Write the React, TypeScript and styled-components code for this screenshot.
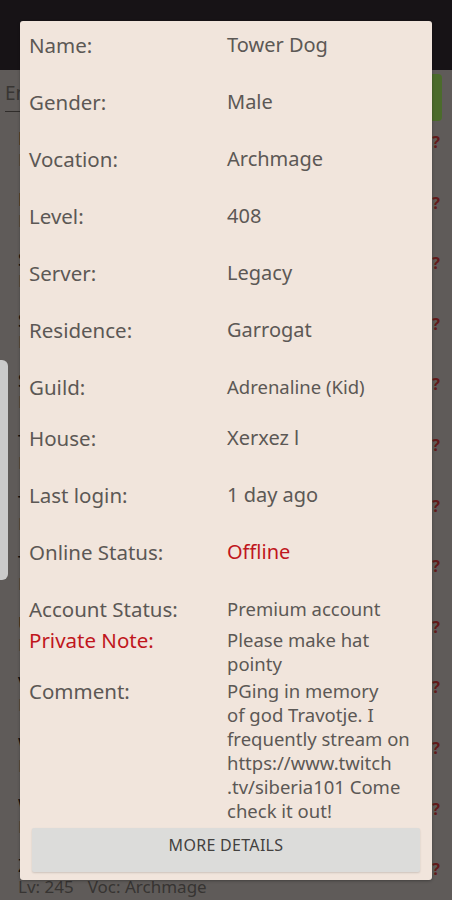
import React from "react"
import styled, { createGlobalStyle } from "styled-components"

const GlobalStyle = createGlobalStyle`
  html, body {
    margin: 0;
    padding: 0;
    background: #5e5a56;
  }
  * {
    box-sizing: border-box;
  }
`

const font = `"Noto Sans", "Open Sans", sans-serif`

type Character = {
  name: string
  level: number
  vocation: string
}

type Field = {
  label: string
  value: string
  gap: number
  red?: "label" | "value"
  small?: boolean
}

const characters: Character[] = [
  { name: "Lord Brutus", level: 512, vocation: "Elite Knight" },
  { name: "Lady Sira", level: 388, vocation: "Royal Paladin" },
  { name: "Sirion", level: 301, vocation: "Elder Druid" },
  { name: "Soul Eater", level: 477, vocation: "Master Sorcerer" },
  { name: "Sweet Pea", level: 199, vocation: "Elder Druid" },
  { name: "Tanker", level: 640, vocation: "Elite Knight" },
  { name: "Tower Dog", level: 408, vocation: "Archmage" },
  { name: "Tuzik", level: 233, vocation: "Royal Paladin" },
  { name: "Ulric", level: 350, vocation: "Elite Knight" },
  { name: "Ventus", level: 288, vocation: "Master Sorcerer" },
  { name: "Wally", level: 412, vocation: "Elder Druid" },
  { name: "Wizzy", level: 317, vocation: "Elder Druid" },
  { name: "Zed Hunter", level: 245, vocation: "Archmage" },
]

const fields: Field[] = [
  { label: "Name:", value: "Tower Dog", gap: 0 },
  { label: "Gender:", value: "Male", gap: 33 },
  { label: "Vocation:", value: "Archmage", gap: 33 },
  { label: "Level:", value: "408", gap: 33 },
  { label: "Server:", value: "Legacy", gap: 33 },
  { label: "Residence:", value: "Garrogat", gap: 33 },
  { label: "Guild:", value: "Adrenaline (Kid)", gap: 33, small: true },
  { label: "House:", value: "Xerxez l", gap: 27 },
  { label: "Last login:", value: "1 day ago", gap: 33 },
  { label: "Online Status:", value: "Offline", gap: 33, red: "value" },
  { label: "Account Status:", value: "Premium account", gap: 33, small: true },
  { label: "Private Note:", value: "Please make hat\npointy", gap: 7, red: "label", small: true },
  {
    label: "Comment:",
    value:
      "PGing in memory\nof god Travotje. I\nfrequently stream on\nhttps://www.twitch\n.tv/siberia101 Come\ncheck it out!",
    gap: 3,
    small: true,
  },
]

const Screen = styled.div`
  position: relative;
  width: 452px;
  height: 900px;
  overflow: hidden;
  background: #d2cbc5;
  font-family: ${font};
`

const AppBar = styled.div`
  height: 70px;
  background: #332c31;
`

const SearchRow = styled.div`
  display: flex;
  align-items: center;
  gap: 10px;
  height: 58px;
  padding: 0 5px;
`

const SearchInput = styled.div`
  flex: 1;
  height: 38px;
  display: flex;
  align-items: center;
  border-bottom: 1px solid #6b6560;
  color: #7d7772;
  font-size: 19px;
  margin-top: -12px;
`

const SearchButton = styled.div`
  height: 47px;
  padding: 0 14px;
  display: flex;
  align-items: center;
  border-radius: 4px;
  background: #a7ee60;
  color: #1c2a10;
  font-size: 16px;
  margin-right: 5px;
  margin-top: -4px;
`

const List = styled.div`
  display: flex;
  flex-direction: column;
`

const Item = styled.div`
  flex: none;
  height: 60.6px;
  display: flex;
  justify-content: space-between;
  padding: 0 12px 0 18px;
`

const ItemText = styled.div`
  display: flex;
  flex-direction: column;
`

const ItemName = styled.div`
  font-size: 18px;
  line-height: 21px;
  color: #222;
`

const ItemMeta = styled.div`
  display: flex;
  gap: 14px;
  font-size: 17px;
  line-height: 21px;
  color: #7a7470;
`

const Hint = styled.div`
  margin-top: 3px;
  font-size: 16px;
  line-height: 22px;
  font-weight: 700;
  color: #d83a3a;
`

const Scrim = styled.div`
  position: absolute;
  inset: 0;
  background: rgba(0, 0, 0, 0.55);
`

const EdgeHandle = styled.div`
  position: absolute;
  left: 0;
  top: 360px;
  width: 8px;
  height: 220px;
  border-radius: 0 6px 6px 0;
  background: #cbcbcb;
`

const Dialog = styled.div`
  position: absolute;
  left: 20px;
  top: 21px;
  width: 412px;
  height: 859px;
  display: flex;
  flex-direction: column;
  background: #f1e5dc;
  border-radius: 3px;
  box-shadow: 0 1px 3px rgba(0, 0, 0, 0.3);
`

const Details = styled.div`
  display: flex;
  flex-direction: column;
  padding: 12px 10px 0 9px;
`

const Row = styled.div<{ $gap: number }>`
  display: grid;
  grid-template-columns: 198px 1fr;
  margin-top: ${(p) => p.$gap}px;
`

const Label = styled.div<{ $red?: boolean }>`
  font-size: 20.5px;
  line-height: 24px;
  white-space: nowrap;
  color: ${(p) => (p.$red ? "#c0161c" : "#5c5855")};
`

const Value = styled.div<{ $red?: boolean; $small?: boolean }>`
  font-size: ${(p) => (p.$small ? 18.5 : 20)}px;
  line-height: 24px;
  white-space: pre-line;
  color: ${(p) => (p.$red ? "#c0161c" : "#5c5855")};
`

const MoreButton = styled.button`
  margin: auto 12px 8px;
  height: 44px;
  border: none;
  border-radius: 2px;
  background: #dcdcda;
  box-shadow: 0 1px 2px rgba(0, 0, 0, 0.15);
  color: #43413f;
  font-family: ${font};
  font-size: 16px;
  letter-spacing: 0.3px;
  padding: 0 0 10px;
`

export default function App() {
  return (
    <>
      <GlobalStyle />
      <Screen>
        <AppBar />
        <SearchRow>
          <SearchInput>Enter character name</SearchInput>
          <SearchButton>SEARCH</SearchButton>
        </SearchRow>
        <List>
          {characters.map((c) => (
            <Item key={c.name}>
              <ItemText>
                <ItemName>{c.name}</ItemName>
                <ItemMeta>
                  <span>Lv: {c.level}</span>
                  <span>Voc: {c.vocation}</span>
                </ItemMeta>
              </ItemText>
              <Hint>?</Hint>
            </Item>
          ))}
        </List>
        <Scrim />
        <EdgeHandle />
        <Dialog>
          <Details>
            {fields.map((f) => (
              <Row key={f.label} $gap={f.gap}>
                <Label $red={f.red === "label"}>{f.label}</Label>
                <Value $red={f.red === "value"} $small={f.small}>
                  {f.value}
                </Value>
              </Row>
            ))}
          </Details>
          <MoreButton>MORE DETAILS</MoreButton>
        </Dialog>
      </Screen>
    </>
  )
}
